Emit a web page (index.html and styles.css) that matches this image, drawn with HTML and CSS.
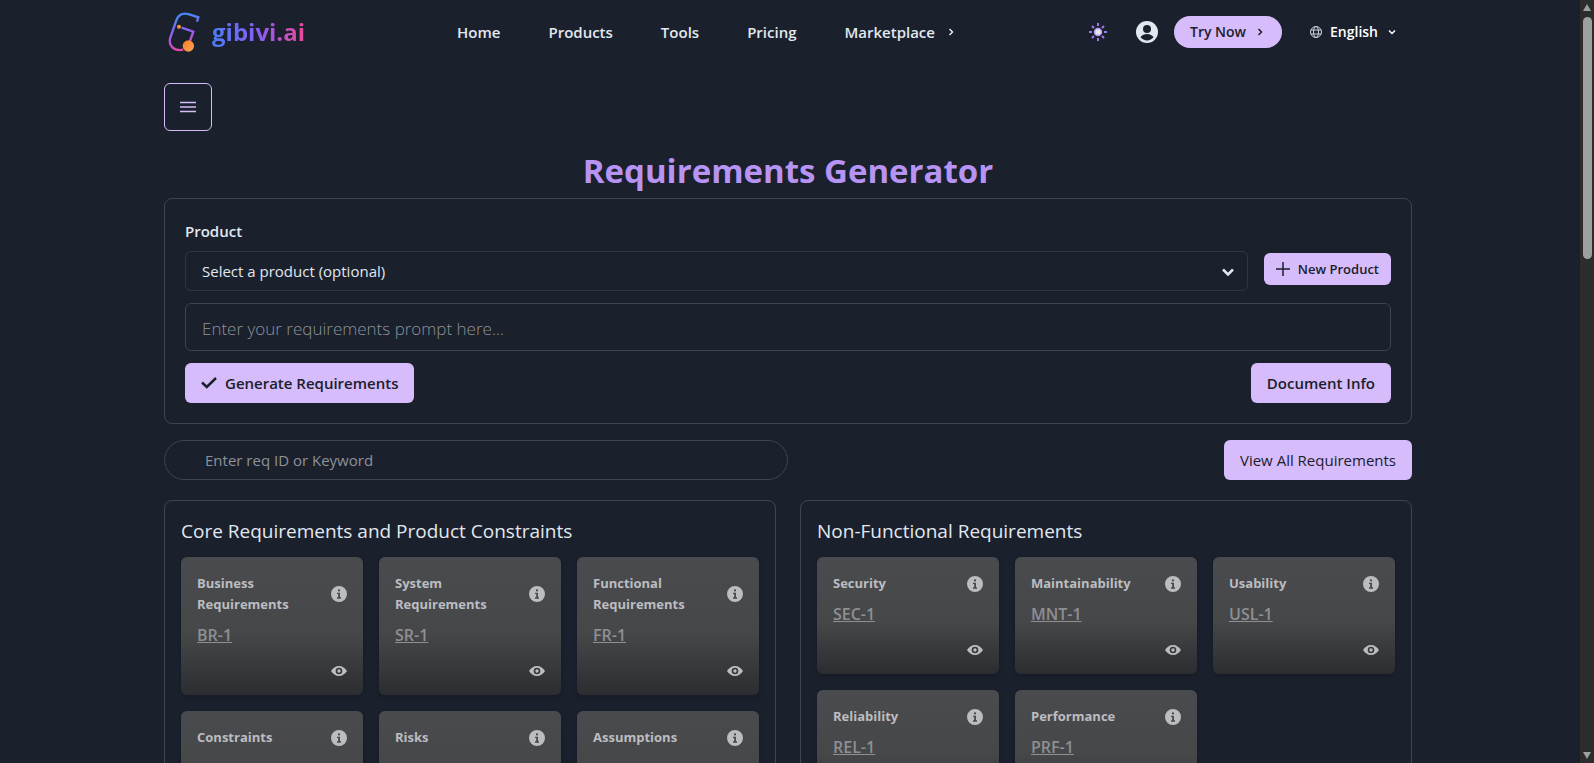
FILE: index.html
```html
<!DOCTYPE html>
<html lang="en">
<head>
    <meta charset="UTF-8">
    <meta name="viewport" content="width=device-width, initial-scale=1">
    <title>Requirements Generator - gibivi.ai</title>
    <link rel="stylesheet" href="styles.css">
</head>
<body>
    <!-- shared icons -->
    <svg class="sprite" aria-hidden="true">
        <symbol id="info" viewBox="0 0 24 24">
            <path fill="currentColor" fill-rule="evenodd" d="M12 0a12 12 0 1 0 0 24 12 12 0 0 0 0-24zM12 5a1.700 1.700 0 1 1 0 3.400 1.700 1.700 0 0 1 0-3.400zM9 10h4.500v7h1.500v2H9v-2h1.800v-5H9z"/>
        </symbol>
        <symbol id="eye" viewBox="0 0 24 24">
            <path fill="currentColor" fill-rule="evenodd" d="M12 4.500C7 4.500 2.700 7.600 0 12c2.700 4.400 7 7.500 12 7.500s9.300-3.100 12-7.500c-2.700-4.400-7-7.500-12-7.500zM12 7a5 5 0 1 1 0 10 5 5 0 0 1 0-10zM12 9.500a2.500 2.500 0 1 0 0 5 2.500 2.500 0 0 0 0-5z"/>
        </symbol>
        <symbol id="chev-right" viewBox="0 0 12 12">
            <path fill="none" stroke="currentColor" stroke-width="1.500" d="M4.500 3 7.500 6l-3 3"/>
        </symbol>
        <symbol id="chev-down" viewBox="0 0 12 12">
            <path fill="none" stroke="currentColor" stroke-width="1.500" d="M3 4.500l3 3 3-3"/>
        </symbol>
    </svg>

    <header class="header">
        <a href="#" class="logo">
            <svg class="logo-mark" viewBox="54 33 96 120" aria-hidden="true">
                <defs>
                    <linearGradient id="brand" gradientUnits="userSpaceOnUse" x1="85" y1="50" x2="110" y2="150">
                        <stop offset="0" stop-color="#4a86f7"/>
                        <stop offset="0.500" stop-color="#9b5cf0"/>
                        <stop offset="1" stop-color="#ec4899"/>
                    </linearGradient>
                    <linearGradient id="dot" x1="0" y1="0" x2="1" y2="1">
                        <stop offset="0" stop-color="#f97c1f"/>
                        <stop offset="1" stop-color="#fda75a"/>
                    </linearGradient>
                </defs>
                <g fill="none" stroke="url(#brand)" stroke-width="7">
                    <path d="M141 62 145 49 118 40C98 34 86 40 79 58L61 110C54 132 70 152 100 146"/>
                    <path d="M95 80 130 92 120 120"/>
                </g>
                <circle cx="87" cy="77" r="6" fill="#fb923c"/>
                <circle cx="115" cy="135" r="17" fill="url(#dot)"/>
            </svg>
            <span class="logo-text">gibivi.ai</span>
        </a>
        <nav class="nav">
            <a href="#">Home</a>
            <a href="#">Products</a>
            <a href="#">Tools</a>
            <a href="#">Pricing</a>
            <a href="#" class="nav-more">Marketplace <svg class="chev"><use href="#chev-right"/></svg></a>
        </nav>
        <div class="actions">
            <button class="icon-btn" aria-label="Toggle color mode">
                <svg width="20" height="20" viewBox="0 0 20 20">
                    <path stroke="#9f7aea" stroke-width="2" d="M10 1v3M10 16v3M1 10h3M16 10h3M4 4l2 2M14 14l2 2M4 16l2-2M14 6l2-2"/>
                    <circle cx="10" cy="10" r="3.500" fill="#e2e8f0" stroke="#b794f4" stroke-width="1.500"/>
                </svg>
            </button>
            <button class="icon-btn" aria-label="Account">
                <svg width="22" height="22" viewBox="0 0 22 22">
                    <circle cx="11" cy="11" r="11" fill="#e2e8f0"/>
                    <circle cx="11" cy="8" r="4" fill="#1a202c"/>
                    <path fill="#1a202c" d="M4.500 16.200c1.500-2 4-3.200 6.500-3.200s5 1.200 6.500 3.200c-1.500 2-4 3.200-6.500 3.200s-5-1.200-6.500-3.200z"/>
                </svg>
            </button>
            <button class="try-btn">Try Now <svg class="chev"><use href="#chev-right"/></svg></button>
            <button class="lang-btn">
                <svg width="12" height="12" viewBox="0 0 12 12" fill="none" stroke="#cbd5e0">
                    <circle cx="6" cy="6" r="5.500"/>
                    <ellipse cx="6" cy="6" rx="2.500" ry="5.500"/>
                    <path d="M1 4h10M1 8h10"/>
                </svg>
                English
                <svg class="chev"><use href="#chev-down"/></svg>
            </button>
        </div>
    </header>

    <main class="content">
        <button class="menu-btn" aria-label="Open menu">
            <svg width="16" height="12" viewBox="0 0 16 12" stroke="currentColor" stroke-width="1.500">
                <path d="M0 1.500h16M0 6h16M0 10.500h16"/>
            </svg>
        </button>

        <h1>Requirements Generator</h1>

        <form class="box prompt-box">
            <label class="label" for="product">Product</label>
            <div class="product-row">
                <div class="select-wrap">
                    <select id="product">
                        <option>Select a product (optional)</option>
                    </select>
                    <svg class="select-icon"><use href="#chev-down"/></svg>
                </div>
                <button type="button" class="btn btn-sm">
                    <svg width="14" height="14" viewBox="0 0 14 14" stroke="currentColor" stroke-width="1.500"><path d="M7 0v14M0 7h14"/></svg>
                    New Product
                </button>
            </div>
            <input type="text" class="prompt" aria-label="Requirements prompt" placeholder="Enter your requirements prompt here...">
            <div class="button-row">
                <button type="button" class="btn">
                    <svg width="16" height="12" viewBox="0 0 16 12" fill="none" stroke="currentColor" stroke-width="2.500"><path d="M1 5.500 5.800 10 15 1"/></svg>
                    Generate Requirements
                </button>
                <button type="button" class="btn">Document Info</button>
            </div>
        </form>

        <div class="search-row">
            <input type="search" class="search" aria-label="Search requirements" placeholder="Enter req ID or Keyword">
            <button class="btn btn-plain">View All Requirements</button>
        </div>

        <div class="panels">
            <section class="box panel">
                <h2>Core Requirements and Product Constraints</h2>
                <div class="cards">
                    <article class="card">
                        <div class="card-head"><h3>Business Requirements</h3><svg class="icon"><use href="#info"/></svg></div>
                        <a href="#">BR-1</a>
                        <svg class="icon view"><use href="#eye"/></svg>
                    </article>
                    <article class="card">
                        <div class="card-head"><h3>System Requirements</h3><svg class="icon"><use href="#info"/></svg></div>
                        <a href="#">SR-1</a>
                        <svg class="icon view"><use href="#eye"/></svg>
                    </article>
                    <article class="card">
                        <div class="card-head"><h3>Functional Requirements</h3><svg class="icon"><use href="#info"/></svg></div>
                        <a href="#">FR-1</a>
                        <svg class="icon view"><use href="#eye"/></svg>
                    </article>
                    <article class="card">
                        <div class="card-head"><h3>Constraints</h3><svg class="icon"><use href="#info"/></svg></div>
                        <svg class="icon view"><use href="#eye"/></svg>
                    </article>
                    <article class="card">
                        <div class="card-head"><h3>Risks</h3><svg class="icon"><use href="#info"/></svg></div>
                        <svg class="icon view"><use href="#eye"/></svg>
                    </article>
                    <article class="card">
                        <div class="card-head"><h3>Assumptions</h3><svg class="icon"><use href="#info"/></svg></div>
                        <svg class="icon view"><use href="#eye"/></svg>
                    </article>
                </div>
            </section>

            <section class="box panel">
                <h2>Non-Functional Requirements</h2>
                <div class="cards">
                    <article class="card">
                        <div class="card-head"><h3>Security</h3><svg class="icon"><use href="#info"/></svg></div>
                        <a href="#">SEC-1</a>
                        <svg class="icon view"><use href="#eye"/></svg>
                    </article>
                    <article class="card">
                        <div class="card-head"><h3>Maintainability</h3><svg class="icon"><use href="#info"/></svg></div>
                        <a href="#">MNT-1</a>
                        <svg class="icon view"><use href="#eye"/></svg>
                    </article>
                    <article class="card">
                        <div class="card-head"><h3>Usability</h3><svg class="icon"><use href="#info"/></svg></div>
                        <a href="#">USL-1</a>
                        <svg class="icon view"><use href="#eye"/></svg>
                    </article>
                    <article class="card">
                        <div class="card-head"><h3>Reliability</h3><svg class="icon"><use href="#info"/></svg></div>
                        <a href="#">REL-1</a>
                        <svg class="icon view"><use href="#eye"/></svg>
                    </article>
                    <article class="card">
                        <div class="card-head"><h3>Performance</h3><svg class="icon"><use href="#info"/></svg></div>
                        <a href="#">PRF-1</a>
                        <svg class="icon view"><use href="#eye"/></svg>
                    </article>
                </div>
            </section>
        </div>
    </main>

    <div class="scrollbar" aria-hidden="true">
        <span class="arrow up"></span>
        <span class="thumb"></span>
        <span class="arrow down"></span>
    </div>
</body>
</html>
```
FILE: styles.css
```css
* {
    box-sizing: border-box;
}

body {
    margin: 0;
    padding-right: 18px;
    height: 100vh;
    overflow: hidden;
    background-color: #1a202c;
    color: #e2e8f0;
    font-family: "Segoe UI", "Open Sans", "Noto Sans", sans-serif;
    font-size: 15px;
    line-height: 24px;
}

h1, h2, h3 {
    margin: 0;
}

a {
    color: inherit;
    text-decoration: none;
}

button, input, select {
    font: inherit;
    color: inherit;
}

button {
    border: none;
    background: none;
    padding: 0;
    cursor: pointer;
}

svg {
    display: block;
    flex-shrink: 0;
}

.sprite {
    display: none;
}

.chev {
    width: 12px;
    height: 12px;
}

/* header */
.header {
    display: grid;
    grid-template-columns: auto auto 1fr;
    align-items: center;
    max-width: 1248px;
    height: 63px;
    margin: 0 auto;
}

.logo {
    display: flex;
    align-items: center;
    gap: 12px;
    padding-left: 4px;
}

.logo-mark {
    width: 32px;
    height: 40px;
}

.logo-text {
    font-size: 24px;
    font-weight: 700;
    line-height: 32px;
    background: linear-gradient(to right, #4a7df8, #8b5cf6 50%, #ec4899);
    -webkit-background-clip: text;
    background-clip: text;
    color: transparent;
}

.nav {
    display: flex;
    gap: 48px;
    margin-left: 152px;
    font-weight: 600;
}

.nav-more {
    display: flex;
    align-items: center;
    gap: 10px;
}

.actions {
    display: flex;
    align-items: center;
    justify-content: flex-end;
    padding-right: 14px;
    font-size: 14px;
    font-weight: 600;
}

.icon-btn {
    margin-right: 28px;
}

.icon-btn + .icon-btn {
    margin-right: 16px;
}

.try-btn,
.lang-btn {
    display: flex;
    align-items: center;
    gap: 8px;
    height: 32px;
}

.try-btn {
    padding: 0 16px;
    margin-right: 28px;
    border-radius: 16px;
    background-color: #d6bcfa;
    color: #1a202c;
}

.lang-btn {
    color: #fff;
}

/* main */
.content {
    max-width: 1248px;
    margin: 0 auto;
    padding-top: 20px;
}

.menu-btn {
    display: flex;
    align-items: center;
    justify-content: center;
    width: 48px;
    height: 48px;
    border: 1px solid #d6bcfa;
    border-radius: 6px;
    color: #d6bcfa;
}

h1 {
    margin-top: 12px;
    color: #b794f4;
    font-size: 33px;
    font-weight: 700;
    line-height: 55px;
    text-align: center;
}

.box {
    border: 1px solid #3f444e;
    border-radius: 8px;
}

.prompt-box {
    display: flex;
    flex-direction: column;
    gap: 12px;
    padding: 20px;
}

.label {
    margin-bottom: -4px;
    font-weight: 600;
}

.product-row {
    display: flex;
    gap: 16px;
}

.select-wrap {
    position: relative;
    flex: 1;
}

.select-wrap select {
    display: block;
    width: 100%;
    height: 40px;
    padding: 0 16px;
    border: 1px solid #2d3748;
    border-radius: 6px;
    background: transparent;
    appearance: none;
}

.select-icon {
    position: absolute;
    top: 11px;
    right: 10px;
    width: 20px;
    height: 20px;
    pointer-events: none;
}

.btn {
    display: flex;
    align-items: center;
    gap: 8px;
    height: 40px;
    padding: 0 16px;
    border-radius: 6px;
    background-color: #d6bcfa;
    color: #1a202c;
    font-weight: 600;
}

.btn-sm {
    height: 32px;
    margin-top: 2px;
    padding: 0 12px;
    font-size: 13px;
}

.btn-plain {
    font-weight: 400;
}

.prompt {
    width: 100%;
    height: 48px;
    padding: 2px 16px 0;
    border: 1px solid #3f444e;
    border-radius: 6px;
    background: transparent;
    font-size: 17px;
    font-weight: 300;
}

.button-row,
.search-row {
    display: flex;
    justify-content: space-between;
}

.search-row {
    margin: 16px 0 20px;
}

.search {
    width: 50%;
    height: 40px;
    padding: 0 40px;
    border: 1px solid #3f444e;
    border-radius: 20px;
    background: transparent;
    appearance: none;
}

::placeholder {
    color: #8d929b;
    opacity: 1;
}

/* requirement panels */
.panels {
    display: grid;
    grid-template-columns: 1fr 1fr;
    align-items: start;
    gap: 24px;
}

.panel {
    padding: 16px;
    min-height: 320px;
}

.panel h2 {
    margin-bottom: 12px;
    font-size: 19px;
    font-weight: 500;
    line-height: 28px;
}

.cards {
    display: grid;
    grid-template-columns: repeat(3, 1fr);
    gap: 16px;
}

.card {
    display: flex;
    flex-direction: column;
    align-items: flex-start;
    padding: 16px;
    border-radius: 6px;
    background: linear-gradient(#4a4b4e, #464749 55%, #2c2d30);
    box-shadow: 0 2px 4px rgba(0, 0, 0, 0.15);
    color: #bcbdc1;
}

.card-head {
    display: flex;
    align-items: center;
    justify-content: space-between;
    gap: 16px;
    width: 100%;
    margin-bottom: 8px;
}

.card h3 {
    font-size: 13px;
    font-weight: 700;
    line-height: 21px;
}

.card a {
    color: #8e8f93;
    font-size: 16px;
    font-weight: 600;
    text-decoration: underline;
}

.icon {
    width: 16px;
    height: 16px;
}

.view {
    align-self: flex-end;
    margin-top: 16px;
}

/* scrollbar */
.scrollbar {
    position: fixed;
    top: 0;
    right: 0;
    bottom: 0;
    display: flex;
    flex-direction: column;
    align-items: center;
    gap: 6px;
    width: 14px;
    padding: 4px 0;
    background-color: #2c2c2c;
}

.thumb {
    width: 9px;
    height: 32%;
    border-radius: 5px;
    background-color: #9f9f9f;
}

.arrow {
    border: 4px solid transparent;
}

.up {
    border-top: none;
    border-bottom: 7px solid #9f9f9f;
}

.down {
    margin-top: auto;
    border-bottom: none;
    border-top: 7px solid #9f9f9f;
}
```
